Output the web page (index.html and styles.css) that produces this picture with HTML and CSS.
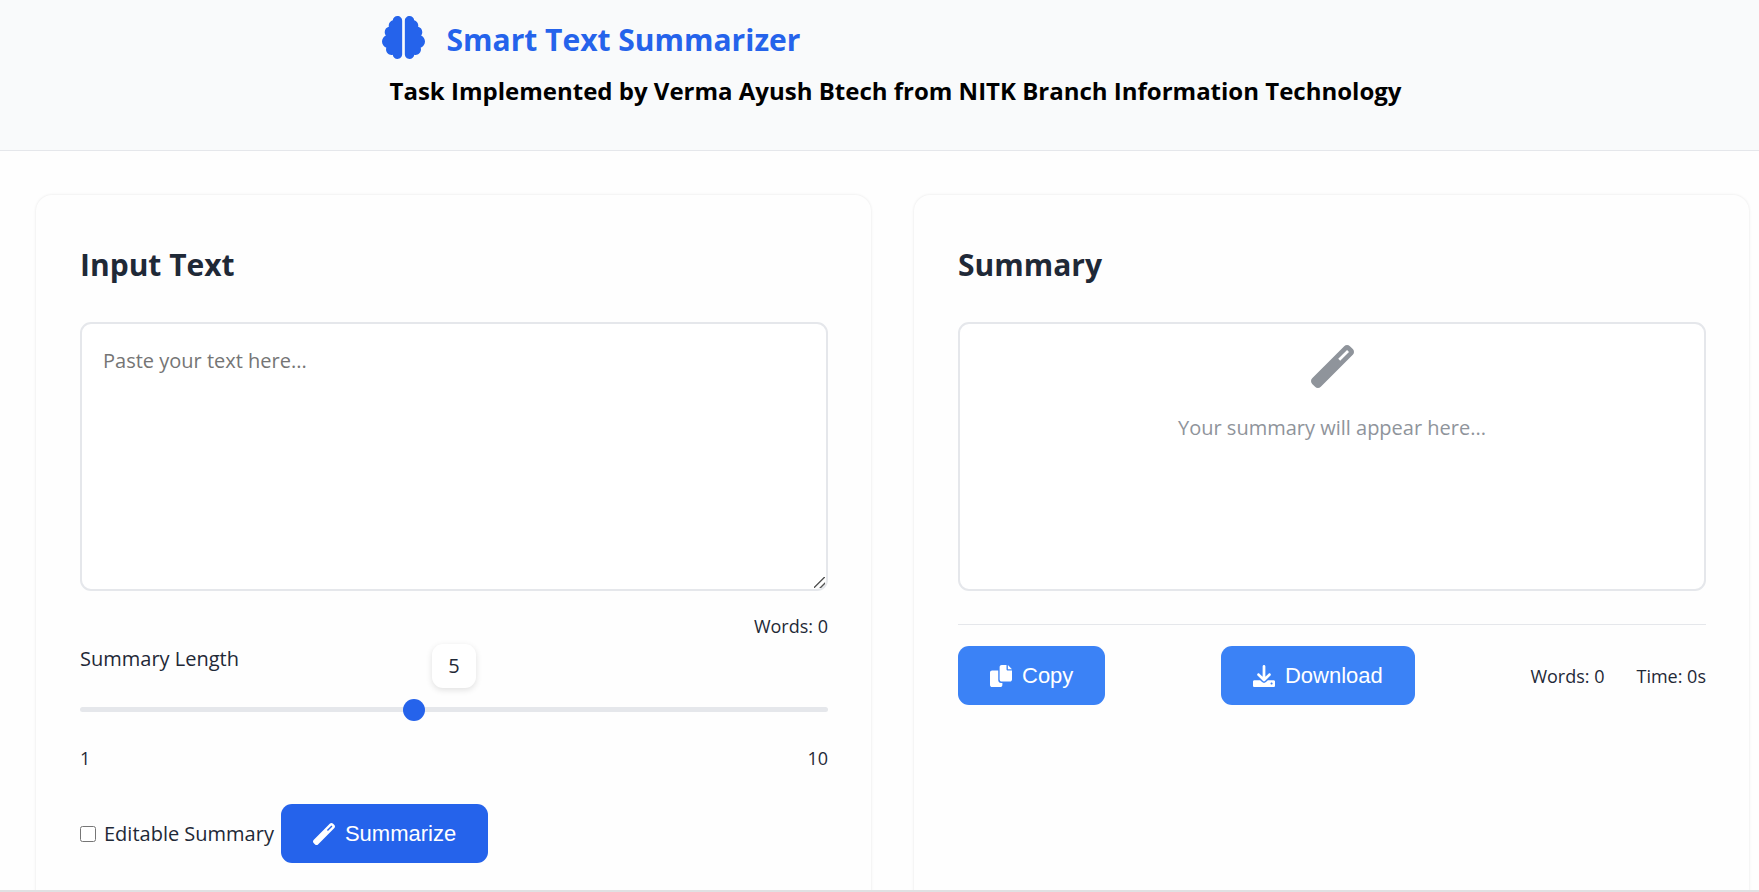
FILE: index.html
```html
<!DOCTYPE html>
<html lang="en">
<head>
<meta charset="utf-8">
<title>Smart Text Summarizer</title>
<link rel="stylesheet" href="styles.css">
</head>
<body>
<header class="header">
  <div class="brand">
    <div class="brand-row">
      <svg class="brand-icon" viewBox="0 0 512 512" aria-hidden="true"><path d="M184 0c30.900 0 56 25.100 56 56V456c0 30.900-25.100 56-56 56c-28.900 0-52.700-21.900-55.700-50.100c-5.200 1.400-10.700 2.100-16.300 2.100c-35.300 0-64-28.700-64-64c0-7.400 1.300-14.600 3.600-21.200C21.400 367.400 0 338.200 0 304c0-31.900 18.700-59.500 45.800-72.300C37.100 220.800 32 207 32 192c0-30.700 21.600-56.300 50.400-62.600C80.800 123.900 80 118 80 112c0-29.900 20.600-55.100 48.300-62.100C131.300 21.900 155.100 0 184 0zM328 0c28.900 0 52.600 21.900 55.700 49.900c27.800 7 48.300 32.100 48.300 62.100c0 6-.8 11.900-2.400 17.400c28.800 6.200 50.400 31.900 50.400 62.600c0 15-5.100 28.800-13.800 39.700C493.300 244.500 512 272.100 512 304c0 34.200-21.400 63.400-51.600 74.800c2.300 6.600 3.600 13.800 3.600 21.200c0 35.300-28.700 64-64 64c-5.600 0-11.100-.7-16.300-2.100c-3 28.200-26.800 50.100-55.700 50.100c-30.900 0-56-25.100-56-56V56c0-30.900 25.100-56 56-56z"/></svg>
      <h1 class="brand-title">Smart Text Summarizer</h1>
    </div>
    <h2 class="brand-subtitle">Task Implemented by Verma Ayush Btech from NITK Branch Information Technology</h2>
  </div>
</header>
<main class="main">
  <section class="card">
    <h2 class="card-title">Input Text</h2>
    <textarea class="input-text" placeholder="Paste your text here..." aria-label="Input text"></textarea>
    <p class="word-count">Words: 0</p>
    <div class="length-head">
      <label class="length-label" for="length">Summary Length</label>
      <output class="bubble" for="length">5</output>
    </div>
    <input class="slider" id="length" type="range" min="1" max="10" value="5">
    <div class="slider-ends"><span>1</span><span>10</span></div>
    <div class="actions">
      <label class="check"><input class="check-box" type="checkbox">Editable Summary</label>
      <button class="btn btn-primary" type="button">
        <svg class="btn-icon" viewBox="0 0 512 512" aria-hidden="true"><path d="M14.100 463.300c-18.700-18.700-18.700-49.100 0-67.900L395.400 14.100c18.700-18.700 49.100-18.700 67.900 0l34.600 34.600c18.700 18.700 18.700 49.100 0 67.900L116.500 497.900c-18.700 18.700-49.100 18.700-67.900 0L14.100 463.300zM347.600 187.600l105-105L429.400 59.300l-105 105 23.300 23.300z"/></svg>
        Summarize
      </button>
    </div>
  </section>
  <section class="card">
    <h2 class="card-title">Summary</h2>
    <div class="output">
      <svg class="output-icon" viewBox="0 0 512 512" aria-hidden="true"><path d="M14.100 463.300c-18.700-18.700-18.700-49.100 0-67.900L395.400 14.100c18.700-18.700 49.100-18.700 67.900 0l34.600 34.600c18.700 18.700 18.700 49.100 0 67.900L116.500 497.900c-18.700 18.700-49.100 18.700-67.900 0L14.100 463.300zM347.600 187.600l105-105L429.400 59.300l-105 105 23.300 23.300z"/></svg>
      <p class="output-hint">Your summary will appear here...</p>
    </div>
    <div class="toolbar">
      <button class="btn btn-secondary" type="button">
        <svg class="btn-icon" viewBox="0 0 512 512" aria-hidden="true"><path d="M384 96L384 0h-112c-26.510 0-48 21.490-48 48v288c0 26.510 21.490 48 48 48H464c26.510 0 48-21.490 48-48V128h-95.100C398.400 128 384 113.600 384 96zM416 0v96h96L416 0zM192 352V128h-144c-26.510 0-48 21.490-48 48v288c0 26.510 21.490 48 48 48h192c26.510 0 48-21.490 48-48L288 416h-32C220.700 416 192 387.300 192 352z"/></svg>
        Copy
      </button>
      <button class="btn btn-secondary" type="button">
        <svg class="btn-icon" viewBox="0 0 512 512" aria-hidden="true"><path d="M480 352h-133.500l-45.250 45.250C289.200 409.300 273.100 416 256 416s-33.160-6.656-45.250-18.750L165.500 352H32c-17.670 0-32 14.330-32 32v96c0 17.670 14.330 32 32 32h448c17.670 0 32-14.330 32-32v-96C512 366.300 497.700 352 480 352zM432 456c-13.200 0-24-10.800-24-24c0-13.200 10.800-24 24-24s24 10.800 24 24C456 445.200 445.200 456 432 456zM233.400 374.600C239.600 380.900 247.800 384 256 384s16.380-3.125 22.620-9.375l128-128c12.490-12.500 12.490-32.750 0-45.250c-12.500-12.500-32.760-12.500-45.250 0L288 274.800V32c0-17.670-14.330-32-32-32C238.300 0 224 14.330 224 32v242.800L150.600 201.400c-12.490-12.500-32.750-12.500-45.250 0c-12.490 12.500-12.490 32.750 0 45.250L233.400 374.600z"/></svg>
        Download
      </button>
      <div class="stats"><span>Words: 0</span><span>Time: 0s</span></div>
    </div>
  </section>
</main>
<footer class="footer"></footer>
</body>
</html>
```
FILE: styles.css
```css
* { box-sizing: border-box; }

body {
  margin: 0;
  height: 100vh;
  display: flex;
  flex-direction: column;
  overflow: hidden;
  background: #fefefe;
  color: #1f2937;
  font-family: "Open Sans", sans-serif;
  font-size: 20px;
  line-height: 32px;
}

h1, h2, p { margin: 0; }

.header {
  display: flex;
  justify-content: center;
  padding: 16px 0 40px 24px;
  background: #f9fafb;
  border-bottom: 1px solid #e5e7eb;
}

.brand-row {
  display: flex;
  align-items: flex-start;
  gap: 22px;
}

.brand-icon {
  width: 43px;
  height: 43px;
  fill: #2563eb;
}

.brand-title {
  color: #2563eb;
  font-size: 30px;
  line-height: 48px;
}

.brand-subtitle {
  padding: 8px 0 0 8px;
  color: #000;
  font-size: 24px;
  line-height: 38px;
}

.main {
  flex: 1;
  min-height: 0;
  display: grid;
  grid-template-columns: 1fr 1fr;
  gap: 43px;
  padding: 44px 10px 0 36px;
  overflow: hidden;
}

.card {
  padding: 44px 43px 44px 44px;
  border-radius: 16px 16px 0 0;
  box-shadow: 0 0 3px rgba(0, 0, 0, 0.1);
}

.card-title {
  margin-bottom: 31px;
  font-size: 30px;
  line-height: 52px;
}

.input-text,
.output {
  display: block;
  width: 100%;
  height: 269px;
  padding: 21px;
  border: 2px solid #e5e7eb;
  border-radius: 11px;
  background: #fff;
}

.input-text {
  color: inherit;
  font: inherit;
  resize: vertical;
}

.input-text::placeholder { color: #757575; }

.input-text::-webkit-resizer {
  background: linear-gradient(135deg, transparent 44%, #555 46% 53%, transparent 55% 72%, #555 74% 81%, transparent 83%) 3px 3px / 11px 11px no-repeat;
}

.output {
  display: flex;
  flex-direction: column;
  align-items: center;
  gap: 24px;
  color: #8f949b;
}

.output-icon {
  width: 43px;
  height: 43px;
  fill: #8f949b;
}

.word-count {
  margin-top: 21px;
  font-size: 18px;
  line-height: 28px;
  text-align: right;
}

.length-head {
  display: grid;
  grid-template-columns: 1fr auto 1fr;
  height: 48px;
}

.length-label { line-height: 38px; }

.bubble {
  align-self: end;
  padding: 6px 16px;
  border-radius: 11px;
  background: #fff;
  box-shadow: 0 2px 6px rgba(0, 0, 0, 0.12);
}

.slider {
  display: block;
  appearance: none;
  width: 100%;
  height: 5px;
  margin: 19px 0 32px;
  border-radius: 3px;
  background: #e5e7eb;
}

.slider::-webkit-slider-thumb {
  appearance: none;
  width: 22px;
  height: 22px;
  border-radius: 50%;
  background: #2563eb;
}

.slider-ends {
  display: flex;
  justify-content: space-between;
  font-size: 18px;
  line-height: 28px;
}

.actions {
  display: flex;
  align-items: center;
  gap: 7px;
  margin-top: 32px;
}

.check {
  display: flex;
  align-items: center;
  gap: 8px;
}

.check-box {
  width: 16px;
  height: 16px;
  margin: 0;
}

.btn {
  display: flex;
  align-items: center;
  gap: 10px;
  height: 59px;
  padding: 0 32px;
  border: 0;
  border-radius: 11px;
  color: #fff;
  font-family: "Liberation Sans", sans-serif;
  font-size: 22px;
}

.btn-primary { background: #2563eb; }
.btn-secondary { background: #3b82f6; }

.btn-icon {
  width: 22px;
  height: 22px;
  fill: #fff;
}

.toolbar {
  display: flex;
  align-items: center;
  justify-content: space-between;
  margin-top: 33px;
  padding-top: 21px;
  border-top: 1px solid #e5e7eb;
}

.stats {
  display: flex;
  gap: 32px;
  font-size: 18px;
  line-height: 28px;
}

.footer { border-top: 2px solid #e0e1e3; }
```
